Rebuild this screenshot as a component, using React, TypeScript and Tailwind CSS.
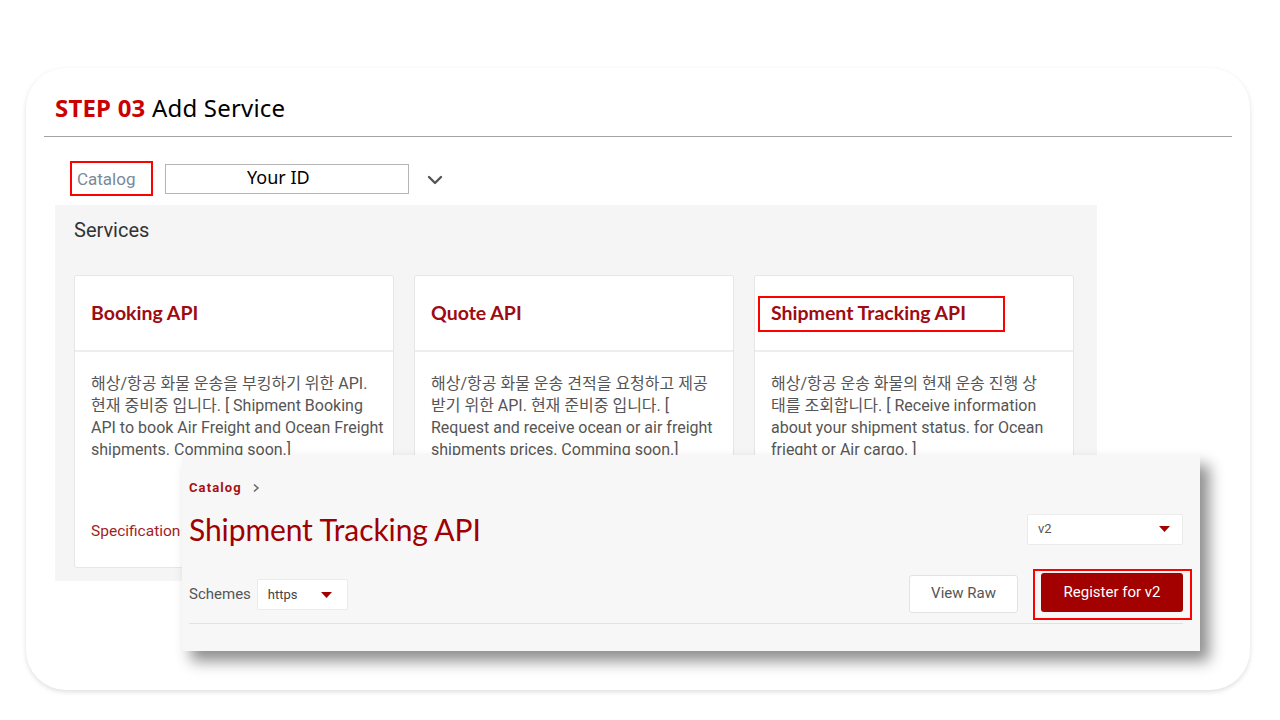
import React from "react";

const Caret = () => (
  <svg width="11" height="6" viewBox="0 0 11 6" className="shrink-0">
    <polygon points="0,0 11,0 5.5,6" fill="#a30000" />
  </svg>
);

const cards = [
  {
    title: "Booking API",
    lines: [
      "해상/항공 화물 운송을 부킹하기 위한 API.",
      "현재 중비중 입니다. [ Shipment Booking",
      "API to book Air Freight and Ocean Freight",
      "shipments. Comming soon.]",
    ],
    hl: false,
  },
  {
    title: "Quote API",
    lines: [
      "해상/항공 화물 운송 견적을 요청하고 제공",
      "받기 위한 API. 현재 준비중 입니다. [",
      "Request and receive ocean or air freight",
      "shipments prices. Comming soon.]",
    ],
    hl: false,
  },
  {
    title: "Shipment Tracking API",
    lines: [
      "해상/항공 운송 화물의 현재 운송 진행 상",
      "태를 조회합니다. [ Receive information",
      "about your shipment status. for Ocean",
      "frieght or Air cargo. ]",
    ],
    hl: true,
  },
];

export default function App() {
  return (
    <div className="w-[1280px] h-[720px] bg-white overflow-hidden pt-[68px] pl-[26px]">
      <div className="relative w-[1224px] h-[622px] rounded-[40px] bg-white shadow-[0_2px_5px_rgba(0,0,0,0.13)]">
        {/* Header */}
        <div className="h-[68px] pt-[26px] pl-[29px]">
          <div className="text-[24px] leading-[28px] text-black tracking-[0.2px]" style={{ fontFamily: '"Noto Sans", "Noto Sans CJK KR", sans-serif' }}>
            <span className="font-bold text-[#cc0000]">STEP 03</span> Add Service
          </div>
        </div>
        <div className="mx-[18px] border-t border-[#a3a3a3]" />

        {/* Catalog row */}
        <div className="mt-[24px] ml-[44px] flex items-center h-[35px]" style={{ fontFamily: 'Roboto, "Noto Sans CJK KR", sans-serif' }}>
          <div className="w-[83px] h-[35px] border-2 border-[#ff0000] flex items-center pl-[5px] pt-[3px] text-[17px] text-[#7a8998]">
            Catalog
          </div>
          <div className="ml-[12px] w-[244px] h-[30px] border border-[#b5b5b5] flex items-center pl-[81px] pb-[2px] text-[18px] text-black" style={{ fontFamily: '"Noto Sans", "Noto Sans CJK KR", sans-serif' }}>
            Your ID
          </div>
          <svg className="ml-[18px] mt-[2px]" width="16" height="12" viewBox="0 0 16 12">
            <polyline points="2,3 8,9 14,3" fill="none" stroke="#555" strokeWidth="2.4" strokeLinecap="round" strokeLinejoin="round" />
          </svg>
        </div>

        {/* Services panel */}
        <div className="mt-[9px] ml-[29px] w-[1042px] h-[376px] bg-[#f5f5f5] pt-[11px] pl-[19px]" style={{ fontFamily: 'Roboto, "Noto Sans CJK KR", sans-serif' }}>
          <div className="text-[20px] leading-[28px] text-[#333]">Services</div>
          <div className="mt-[31px] flex gap-[20px]">
            {cards.map((c, i) => (
              <div key={i} className="w-[320px] h-[293px] bg-white border border-[#e6e6e6] rounded-[3px] flex flex-col">
                <div className="h-[76px] border-b-2 border-[#eeeeee] flex items-center">
                  {c.hl ? (
                    <div className="ml-[3px] mt-[1px] w-[247px] h-[36px] border-2 border-[#ff0000] flex items-center pl-[11px] pb-[2px]">
                      <span className="text-[19.5px] font-bold text-[#9e0b12]" style={{ fontFamily: 'Lato, sans-serif' }}>{c.title}</span>
                    </div>
                  ) : (
                    <span className="pl-[16px] text-[19.5px] font-bold text-[#9e0b12]" style={{ fontFamily: 'Lato, sans-serif' }}>{c.title}</span>
                  )}
                </div>
                <div className="pt-[21px] px-[16px] text-[16px] leading-[22px] text-[#555] whitespace-nowrap">
                  {c.lines.map((l, j) => (
                    <div key={j}>{l}</div>
                  ))}
                </div>
                <div className="mt-auto mb-[24px] pl-[16px] text-[15.5px] text-[#a51c1c]">Specification</div>
              </div>
            ))}
          </div>
        </div>

        {/* Overlay detail panel */}
        <div
          className="absolute left-[156px] top-[387px] w-[1018px] h-[196px] bg-[#f7f7f7] shadow-[9px_10px_14px_rgba(0,0,0,0.45)] pl-[7px] pr-[8px] pt-[23px] flex flex-col"
          style={{ fontFamily: 'Roboto, "Noto Sans CJK KR", sans-serif' }}
        >
          <div className="h-[20px] flex items-center">
            <span className="text-[13px] font-bold tracking-[1.1px] text-[#a51212]">Catalog</span>
            <svg className="ml-[10px]" width="8" height="10" viewBox="0 0 8 10">
              <polyline points="2,1.5 6,5 2,8.5" fill="none" stroke="#666" strokeWidth="1.5" />
            </svg>
          </div>
          <div className="mt-[13px] h-[36px] flex items-center justify-between pr-[9px]">
            <span className="text-[30px] leading-[36px] text-[#a00000] tracking-[-0.1px]" style={{ fontFamily: 'Lato, sans-serif' }}>
              Shipment Tracking API
            </span>
            <div className="w-[156px] h-[31px] bg-white border border-[#ebebeb] rounded-[2px] flex items-center justify-between pl-[10px] pr-[12px]">
              <span className="text-[13px] text-[#555]">v2</span>
              <Caret />
            </div>
          </div>
          <div className="mt-[22px] h-[51px] flex items-center">
            <span className="text-[15px] text-[#555]">Schemes</span>
            <div className="ml-[6px] w-[91px] h-[31px] bg-white border border-[#ebebeb] rounded-[2px] flex items-center pl-[10px]">
              <span className="text-[13px] text-[#444]">https</span>
              <span className="ml-[23px] flex"><Caret /></span>
            </div>
            <div className="ml-auto w-[109px] h-[38px] mt-[-2px] bg-white border border-[#e3e3e3] rounded-[3px] flex items-center justify-center text-[15px] text-[#555]">
              View Raw
            </div>
            <div className="ml-[15px] w-[159px] h-[51px] border-2 border-[#ff0000] pt-[2px] pl-[6px]">
              <div className="w-[142px] h-[39px] bg-[#a30000] rounded-[3px] flex items-center justify-center text-[15px] text-white">
                Register for v2
              </div>
            </div>
          </div>
          <div className="mt-[3px] mr-[9px] border-t border-[#e2e2e2]" />
        </div>
      </div>
    </div>
  );
}
